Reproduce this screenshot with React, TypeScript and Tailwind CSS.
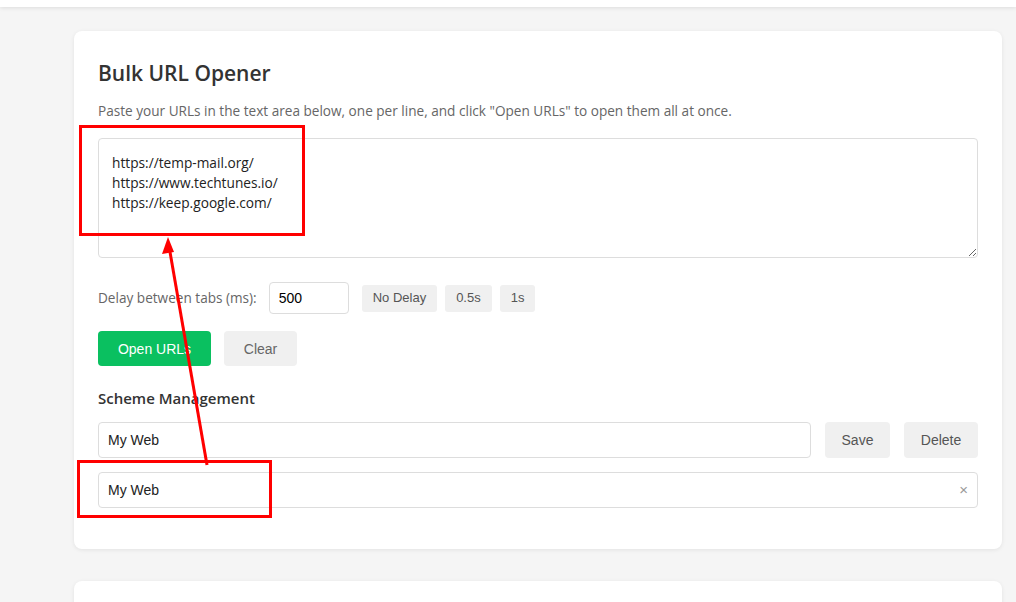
import React from "react";

const urls = "https://temp-mail.org/\nhttps://www.techtunes.io/\nhttps://keep.google.com/";

export default function App() {
  return (
    <div
      className="relative min-h-[602px] bg-[#f5f5f5] overflow-hidden"
      style={{ fontFamily: '"Open Sans", "Noto Sans", sans-serif' }}
    >
      {/* top bar */}
      <div className="h-[7px] bg-white shadow-[0_1px_4px_rgba(0,0,0,0.1)]" />

      {/* main card */}
      <div className="ml-[74px] mt-6 w-[928px] rounded-lg bg-white px-6 pt-[26px] pb-[41px] shadow-[0_1px_4px_rgba(0,0,0,0.08)]">
        <h1 className="h-8 text-[21px] leading-8 font-semibold text-[#333]">Bulk URL Opener</h1>
        <p className="mt-[12px] text-[13.6px] leading-5 text-[#666]">
          Paste your URLs in the text area below, one per line, and click "Open URLs" to open them all at once.
        </p>

        <textarea
          readOnly
          value={urls}
          className="mt-[17px] block h-[120px] w-full resize-y rounded border border-[#ddd] px-[13px] pt-[14px] text-[13.7px] leading-5 text-[#222] outline-none"
        />

        {/* delay row */}
        <div className="mt-6 flex h-8 items-center text-[13px]" style={{ fontFamily: '"Liberation Sans", Arial, sans-serif' }}>
          <span className="text-[13.6px] text-[#666]" style={{ fontFamily: '"Open Sans", "Noto Sans", sans-serif' }}>
            Delay between tabs (ms):
          </span>
          <input
            readOnly
            value="500"
            className="ml-3 h-8 w-[80px] rounded border border-[#ddd] px-[9px] text-sm text-black outline-none"
          />
          <button className="ml-[13px] h-[27px] rounded-[3px] bg-[#f0f0f0] px-[11px] text-[#555]">No Delay</button>
          <button className="ml-2 h-[27px] rounded-[3px] bg-[#f0f0f0] px-[11px] text-[#555]">0.5s</button>
          <button className="ml-2 h-[27px] rounded-[3px] bg-[#f0f0f0] px-[11px] text-[#555]">1s</button>
        </div>

        {/* action buttons */}
        <div className="mt-[17px] flex gap-[13px] text-sm" style={{ fontFamily: '"Liberation Sans", Arial, sans-serif' }}>
          <button className="h-[35px] w-[113px] rounded bg-[#0ac060] text-white">Open URLs</button>
          <button className="h-[35px] w-[73px] rounded bg-[#f0f0f0] text-[#666]">Clear</button>
        </div>

        <h2 className="mt-[22px] text-[15px] leading-5 font-semibold text-[#333]">Scheme Management</h2>

        <div className="mt-[14px] flex gap-[14px] text-sm" style={{ fontFamily: '"Liberation Sans", Arial, sans-serif' }}>
          <input
            readOnly
            value="My Web"
            className="h-9 flex-1 rounded border border-[#ddd] px-[9px] text-[#222] outline-none"
          />
          <button className="h-9 w-[65px] rounded bg-[#f0f0f0] text-[#555]">Save</button>
          <button className="h-9 w-[74px] rounded bg-[#f0f0f0] text-[#555]">Delete</button>
        </div>

        <div
          className="mt-[14px] flex h-9 items-center justify-between rounded border border-[#ddd] pl-[9px] pr-[9px] text-sm text-[#222]"
          style={{ fontFamily: '"Liberation Sans", Arial, sans-serif' }}
        >
          <span>My Web</span>
          <span className="text-[15px] text-[#999]">×</span>
        </div>
      </div>

      {/* next card */}
      <div className="ml-[74px] mt-8 h-10 w-[928px] rounded-lg bg-white shadow-[0_1px_4px_rgba(0,0,0,0.08)]" />

      {/* annotation overlay */}
      <div className="pointer-events-none absolute left-[79px] top-[125px] h-[111px] w-[226px] border-[3px] border-[#ff0000]" />
      <div className="pointer-events-none absolute left-[77px] top-[460px] h-[58px] w-[195px] border-[3px] border-[#ff0000]" />
      <svg className="pointer-events-none absolute left-0 top-0" width="1016" height="602">
        <line x1="207" y1="465" x2="170" y2="252" stroke="#ff0000" strokeWidth="3" />
        <polygon points="168,237 162,254 174,252" fill="#ff0000" />
      </svg>
    </div>
  );
}
